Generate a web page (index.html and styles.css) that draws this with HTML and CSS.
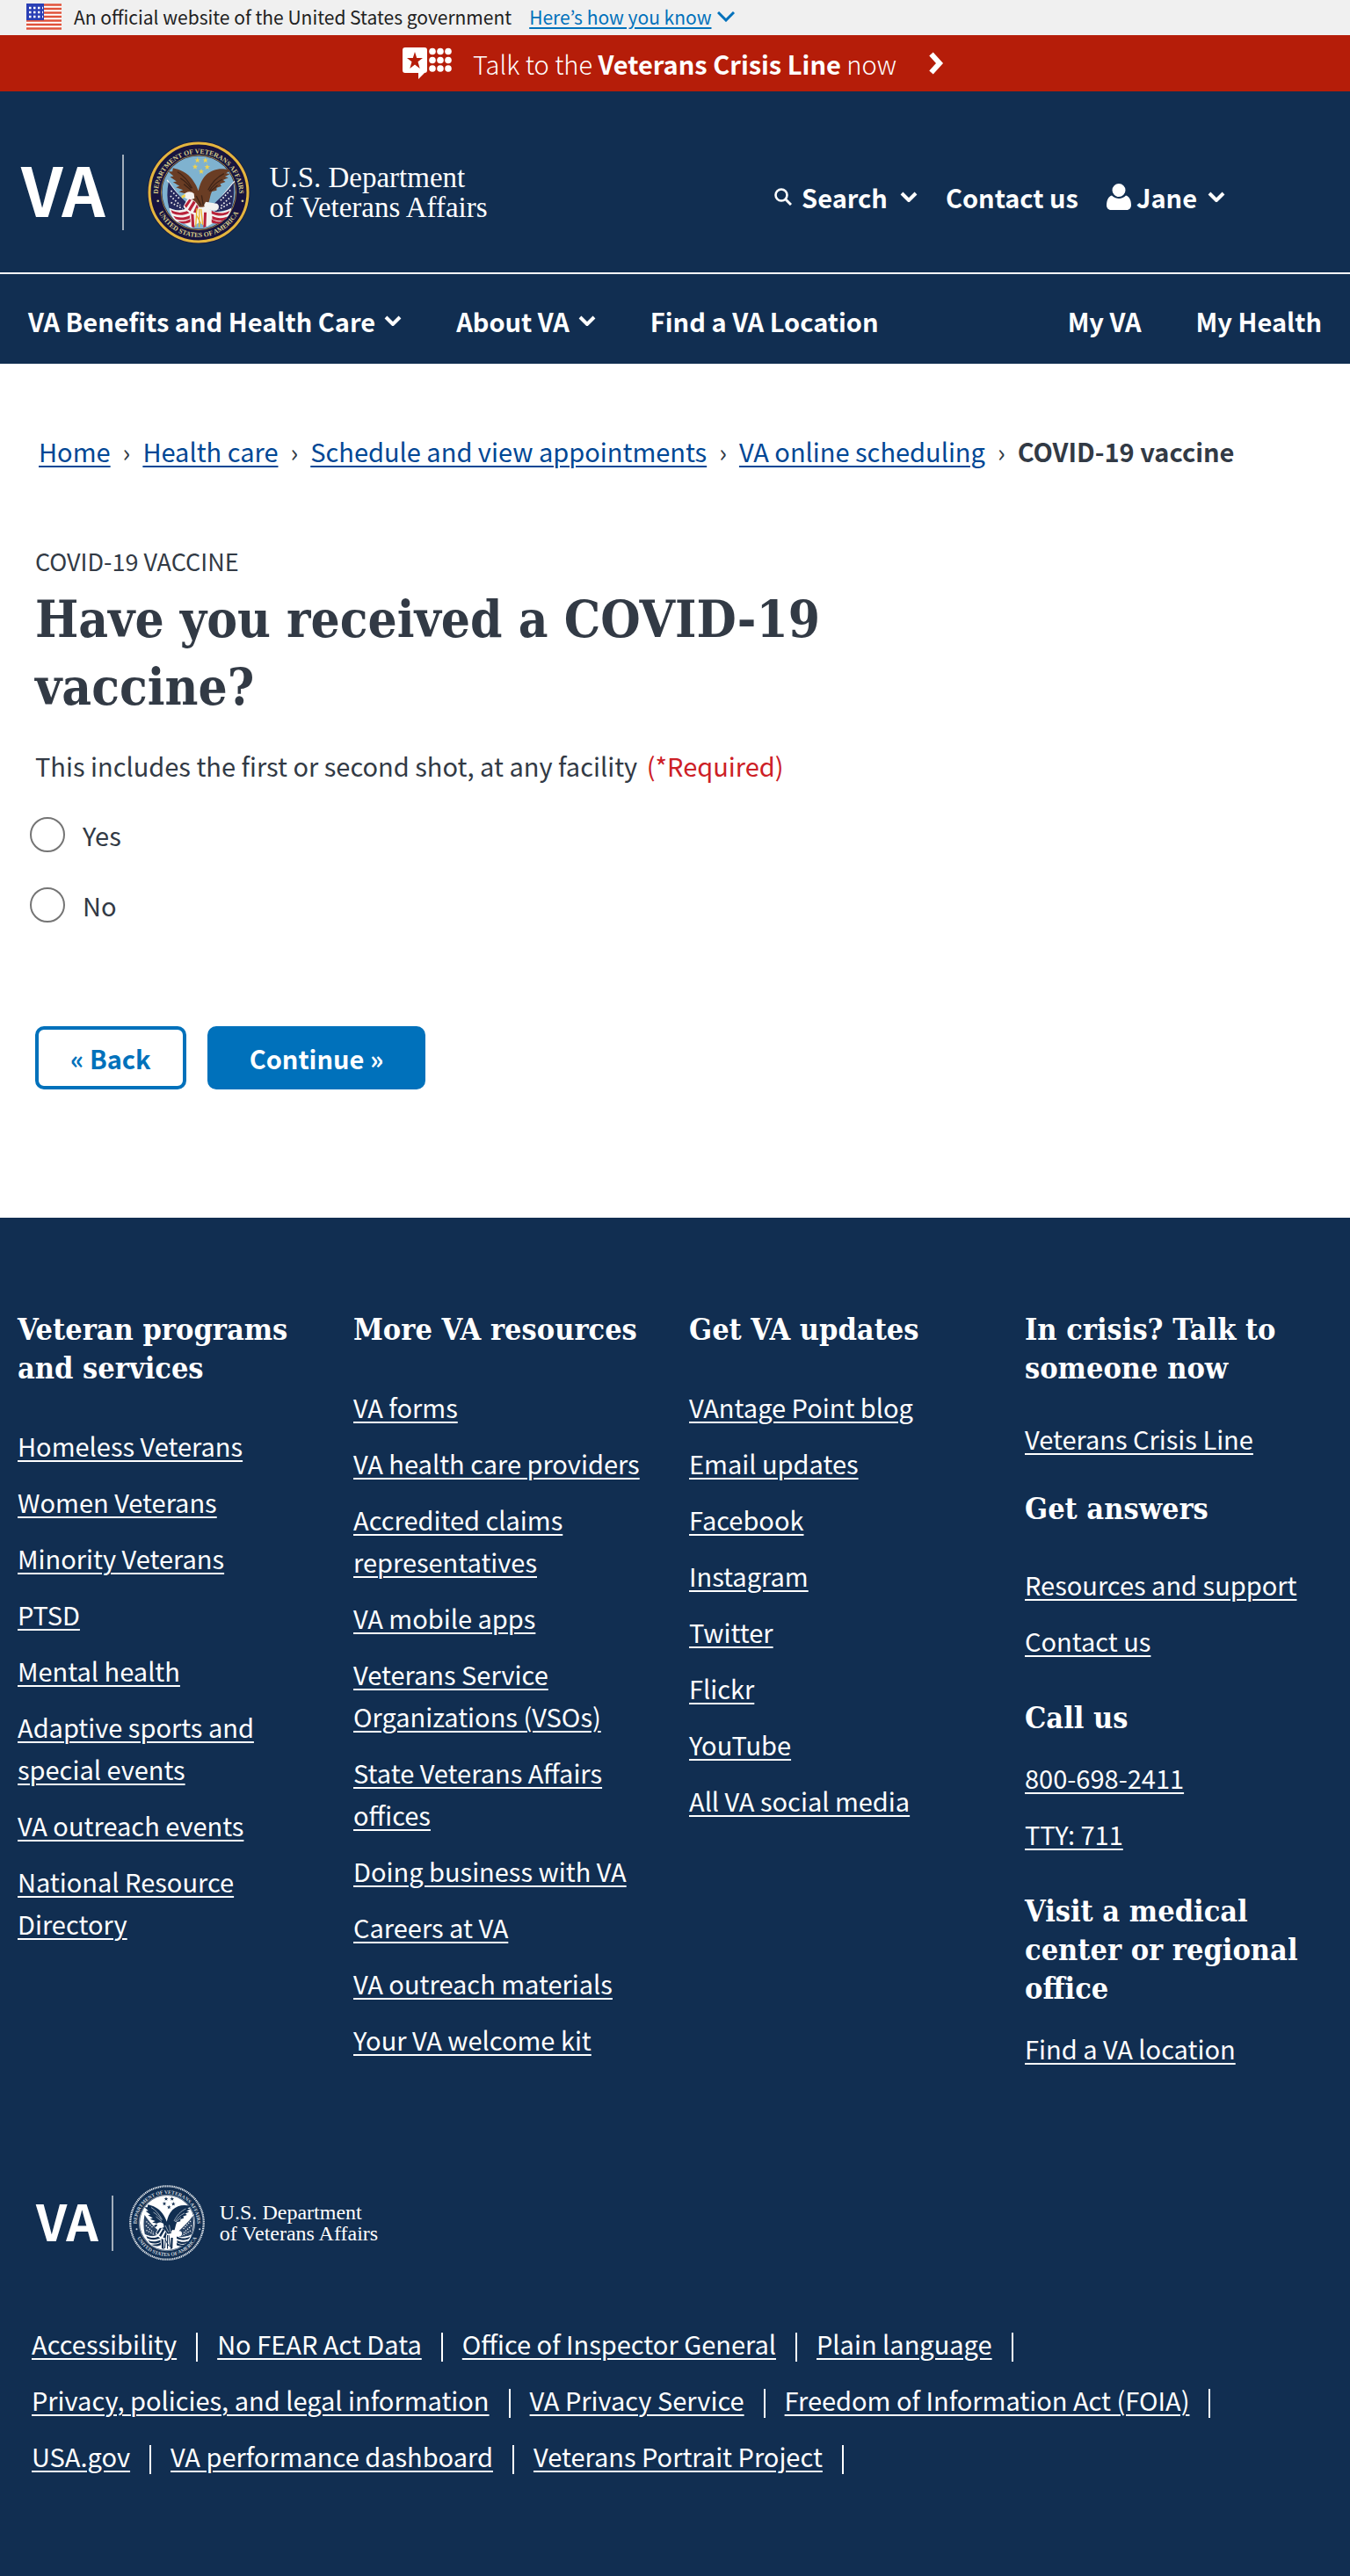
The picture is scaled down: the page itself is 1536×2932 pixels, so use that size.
FILE: index.html
```html
<!DOCTYPE html>
<html lang="en">
<head>
<meta charset="utf-8">
<meta name="viewport" content="width=device-width, initial-scale=1">
<title>COVID-19 vaccine | Veterans Affairs</title>
<link rel="stylesheet" href="styles.css">
</head>
<body>

<svg class="sprite" aria-hidden="true">
  <defs>
    <symbol id="chevron-down" viewBox="0 0 20 12"><path d="M2 2l8 8 8-8" fill="none" stroke="currentColor" stroke-width="4"/></symbol>
    <path id="seal-star" d="M0-10l2.4 6.8 7.2.1-5.8 4.3 2.1 6.9L0 4l-5.9 4.1 2.1-6.9-5.8-4.3 7.2-.1z"/>
    <path id="ring-top" d="M46 200A138 138 0 0 1 322 200"/>
    <path id="ring-bottom" d="M32 194A152 152 0 0 0 336 194"/>
    <!-- Department seal; colours come from the custom properties of the svg that uses it -->
    <symbol id="seal" viewBox="8 18 352 352">
      <circle class="s-edge" cx="184" cy="194" r="174"/>
      <circle class="s-rope" cx="184" cy="194" r="167"/>
      <circle class="s-ring" cx="184" cy="194" r="160"/>
      <circle class="s-line" cx="184" cy="194" r="127"/>
      <circle class="s-sky" cx="184" cy="194" r="124"/>
      <text class="s-text"><textPath href="#ring-top" startOffset="50%">DEPARTMENT OF VETERANS AFFAIRS</textPath></text>
      <text class="s-text"><textPath href="#ring-bottom" startOffset="50%">UNITED STATES OF AMERICA</textPath></text>
      <circle class="s-dot" cx="46" cy="223" r="4"/><circle class="s-dot" cx="333" cy="223" r="4"/>
      <g class="s-star">
        <use href="#seal-star" x="180" y="85"/><use href="#seal-star" x="207" y="85"/>
        <use href="#seal-star" x="172" y="107"/><use href="#seal-star" x="213" y="108"/>
        <use href="#seal-star" x="193" y="123"/>
      </g>
      <!-- flags -->
      <path class="s-pole" d="M77 152l90 122M306 156l-92 112"/>
      <path class="s-blue" d="M82 158c16 26 40 52 68 76l-8 30-58-16c-8-30-8-60-2-90z"/>
      <path class="s-blue" d="M302 162c-18 26-46 52-74 78l14 20 52-8c10-30 12-60 8-90z"/>
      <path class="s-dash" d="M90 188l30 28M88 206l34 32M90 228l40 22M292 186l-34 36M296 206l-36 34M292 230l-40 22"/>
      <path class="s-white" d="M84 246c26 14 48 10 70-4l34-16 40 30c24 10 46 2 68-10-8 36-30 50-56 48l-28 16-26-14-28 18-28-18c-22 6-40-16-46-50z"/>
      <path class="s-red" d="M90 254c22 12 42 10 62 0v10c-22 10-42 8-58 0zM98 274c20 8 38 6 56-2v10c-18 8-34 8-48 2zM112 292c16 2 30 0 44-8v11c-12 6-24 6-32 3zM290 256c-22 12-42 10-62 0v10c22 10 42 8 56 0zM282 276c-20 8-36 6-52-2v10c18 8 32 8 44 2zM268 293c-14 2-26 0-40-8v11c10 5 20 5 28 3zM158 262h9l3 52-10-4zM202 262h9l-2 48-9 4z"/>
      <!-- wings, body, head and tail -->
      <path class="s-eagle" d="M97 111c22 4 50 16 66 40 10 14 16 26 20 38 4-18 10-38 26-54 22-20 52-26 84-16l-16 10 14 2-18 9 12 4-18 8 8 6-18 7 4 8-16 5 0 9-16 4c-6 12-6 22-10 34-6 14-20 22-34 18-14-4-28-18-40-34l-14-4 12-6-26-7 14-6-24-9 12-5-22-13 12-2-22-16 12-2-18-16 14 0z"/>
      <path class="s-feather" d="M112 124c20 12 36 30 50 56M122 146c14 8 26 20 36 34M134 166l26 22M270 130c-24 12-40 28-54 56M264 150c-18 8-32 20-44 40M248 170l-24 20M176 206l16 32M194 204l6 34"/>
      <path class="s-head" d="M168 198c-10-10-28-8-34 4l-8 6 10 2c6 10 24 10 34 4zM208 226l38 6c10 6 8 18-2 24-16 0-32-6-42-18z"/>
      <path class="s-beak" d="M138 200l-13 6 3 9 11-7z"/>
      <path class="s-white" d="M146 216c16-2 32 10 40 30l-8 24c-20 0-36-10-46-28z"/>
      <path class="s-red" d="M152 217l-16 22 6 8 18-28zM166 222l-18 30 8 6 18-30zM178 234l-12 27 9 2 8-18z"/>
      <path class="s-claw" d="M178 248l-4 62M186 250v62M192 250l6 54M176 270l16 30"/>
    </symbol>
  </defs>
</svg>

<div class="gov-banner">
  <svg class="gov-flag" viewBox="0 0 40 30" aria-hidden="true">
    <rect width="40" height="30" fill="#fff"/>
    <path d="M0 1.500h40M0 6h40M0 10.500h40M0 15h40M0 19.500h40M0 24h40M0 28.500h40" stroke="#e0523a" stroke-width="2.400"/>
    <rect width="20" height="19" fill="#2a3fb5"/>
    <path d="M3 5h16M3 10h16M3 15h16" stroke="#fff" stroke-width="2.500" stroke-dasharray="2.500 2.500"/>
  </svg>
  <span class="gov-text">An official website of the United States government</span>
  <button class="gov-toggle" type="button"><span>Here’s how you know</span><svg class="chevron thin" aria-hidden="true" viewBox="0 0 20 12"><path d="M1 1l9 9 9-9" fill="none" stroke="currentColor" stroke-width="3"/></svg></button>
</div>

<a class="crisis" href="#crisis">
  <svg class="crisis-icon" viewBox="0 0 56 36" aria-hidden="true">
    <path fill="#fff" fill-rule="evenodd" d="M3 0h22a3 3 0 0 1 3 3v23a3 3 0 0 1-3 3l-7 7v-7H3a3 3 0 0 1-3-3V3a3 3 0 0 1 3-3zM14 5l-2.200 7H5l5.500 4.200L8.300 24l5.700-4.600 5.700 4.600-2.200-7.800L23 12h-6.800z"/>
    <g fill="#fff"><circle cx="34" cy="4.500" r="3.800"/><circle cx="43" cy="4.500" r="3.800"/><circle cx="52" cy="4.500" r="3.800"/><circle cx="34" cy="14.500" r="3.800"/><circle cx="43" cy="14.500" r="3.800"/><circle cx="52" cy="14.500" r="3.800"/><circle cx="34" cy="24" r="3.800"/><circle cx="43" cy="24" r="3.800"/><circle cx="52" cy="24" r="3.800"/></g>
  </svg>
  <span>Talk to the <strong>Veterans Crisis Line</strong> now</span>
  <svg class="crisis-arrow" viewBox="0 0 18 26" aria-hidden="true"><path d="M3.500 2.500L13 13 3.500 23.500" fill="none" stroke="#fff" stroke-width="6"/></svg>
</a>

<header class="header">
  <a class="logo" href="#home" aria-label="VA, U.S. Department of Veterans Affairs">
    <span class="logo-va">VA</span>
    <span class="logo-rule"></span>
    <svg class="seal seal-color" aria-hidden="true"><use href="#seal"/></svg>
    <span class="logo-name">U.S. Department<br>of Veterans Affairs</span>
  </a>
  <div class="utilities">
    <button class="utility" type="button">
      <svg class="icon-search" viewBox="0 0 20 20" aria-hidden="true"><circle cx="8" cy="8" r="6.500" fill="none" stroke="currentColor" stroke-width="2.600"/><path d="M13 13l6 6" stroke="currentColor" stroke-width="3"/></svg>
      <span class="search-label">Search</span>
      <svg class="chevron" aria-hidden="true"><use href="#chevron-down"/></svg>
    </button>
    <a class="utility" href="#contact">Contact us</a>
    <button class="utility" type="button">
      <svg class="icon-user" viewBox="0 0 28 30" aria-hidden="true"><path fill="currentColor" d="M14 0a7.500 7.500 0 0 1 0 15 7.500 7.500 0 0 1 0-15zM6 13.500c4 4.500 12 4.500 16 0 4 1 6 6 6 11 0 3-2 5.500-5 5.500H5c-3 0-5-2.500-5-5.500 0-5 2-10 6-11z"/></svg>
      <span class="user-label">Jane</span>
      <svg class="chevron" aria-hidden="true"><use href="#chevron-down"/></svg>
    </button>
  </div>
</header>

<nav class="main-nav" aria-label="Main">
  <button class="nav-item" type="button">VA Benefits and Health Care <svg class="chevron" aria-hidden="true"><use href="#chevron-down"/></svg></button>
  <button class="nav-item" type="button">About VA <svg class="chevron" aria-hidden="true"><use href="#chevron-down"/></svg></button>
  <a class="nav-item" href="#find">Find a VA Location</a>
  <a class="nav-item push" href="#myva">My VA</a>
  <a class="nav-item" href="#myhealth">My Health</a>
</nav>

<nav aria-label="Breadcrumb">
  <ol class="breadcrumb">
    <li><a href="#home">Home</a></li>
    <li><a href="#health">Health care</a></li>
    <li><a href="#appointments">Schedule and view appointments</a></li>
    <li><a href="#scheduling">VA online scheduling</a></li>
    <li><strong>COVID-19 vaccine</strong></li>
  </ol>
</nav>

<main class="content">
  <p class="kicker">COVID-19 VACCINE</p>
  <h1>Have you received a COVID-19 vaccine?</h1>
  <form>
    <fieldset class="question">
      <legend>This includes the first or second shot, at any facility <span class="required">(*Required)</span></legend>
      <div class="options">
        <label class="option" for="yes"><input type="radio" name="received" id="yes"><span>Yes</span></label>
        <label class="option" for="no"><input type="radio" name="received" id="no"><span>No</span></label>
      </div>
    </fieldset>
    <div class="actions">
      <button class="btn btn-back" type="button">« Back</button>
      <button class="btn btn-next" type="submit">Continue »</button>
    </div>
  </form>
</main>

<footer class="footer">
  <div class="footer-grid">
    <section>
      <h2>Veteran programs and services</h2>
      <ul>
        <li><a href="#f">Homeless Veterans</a></li>
        <li><a href="#f">Women Veterans</a></li>
        <li><a href="#f">Minority Veterans</a></li>
        <li><a href="#f">PTSD</a></li>
        <li><a href="#f">Mental health</a></li>
        <li><a href="#f">Adaptive sports and special events</a></li>
        <li><a href="#f">VA outreach events</a></li>
        <li><a href="#f">National Resource Directory</a></li>
      </ul>
    </section>
    <section>
      <h2>More VA resources</h2>
      <ul>
        <li><a href="#f">VA forms</a></li>
        <li><a href="#f">VA health care providers</a></li>
        <li><a href="#f">Accredited claims representatives</a></li>
        <li><a href="#f">VA mobile apps</a></li>
        <li><a href="#f">Veterans Service Organizations (VSOs)</a></li>
        <li><a href="#f">State Veterans Affairs offices</a></li>
        <li><a href="#f">Doing business with VA</a></li>
        <li><a href="#f">Careers at VA</a></li>
        <li><a href="#f">VA outreach materials</a></li>
        <li><a href="#f">Your VA welcome kit</a></li>
      </ul>
    </section>
    <section>
      <h2>Get VA updates</h2>
      <ul>
        <li><a href="#f">VAntage Point blog</a></li>
        <li><a href="#f">Email updates</a></li>
        <li><a href="#f">Facebook</a></li>
        <li><a href="#f">Instagram</a></li>
        <li><a href="#f">Twitter</a></li>
        <li><a href="#f">Flickr</a></li>
        <li><a href="#f">YouTube</a></li>
        <li><a href="#f">All VA social media</a></li>
      </ul>
    </section>
    <section>
      <h2>In crisis? Talk to someone now</h2>
      <ul class="near">
        <li><a href="#f">Veterans Crisis Line</a></li>
      </ul>
      <h2 class="near">Get answers</h2>
      <ul>
        <li><a href="#f">Resources and support</a></li>
        <li><a href="#f">Contact us</a></li>
      </ul>
      <h2>Call us</h2>
      <ul class="tight">
        <li><a href="#f">800-698-2411</a></li>
        <li><a href="#f">TTY: 711</a></li>
      </ul>
      <h2>Visit a medical center or regional office</h2>
      <ul class="tight">
        <li><a href="#f">Find a VA location</a></li>
      </ul>
    </section>
  </div>

  <a class="logo logo-small" href="#home" aria-label="VA, U.S. Department of Veterans Affairs">
    <span class="logo-va">VA</span>
    <span class="logo-rule"></span>
    <svg class="seal seal-mono" aria-hidden="true"><use href="#seal"/></svg>
    <span class="logo-name">U.S. Department<br>of Veterans Affairs</span>
  </a>

  <ul class="legal">
    <li><a href="#f">Accessibility</a></li>
    <li><a href="#f">No FEAR Act Data</a></li>
    <li><a href="#f">Office of Inspector General</a></li>
    <li><a href="#f">Plain language</a></li>
    <li><a href="#f">Privacy, policies, and legal information</a></li>
    <li><a href="#f">VA Privacy Service</a></li>
    <li><a href="#f">Freedom of Information Act (FOIA)</a></li>
    <li><a href="#f">USA.gov</a></li>
    <li><a href="#f">VA performance dashboard</a></li>
    <li><a href="#f">Veterans Portrait Project</a></li>
  </ul>
</footer>

</body>
</html>
```
FILE: styles.css
```css
:root {
  --navy: #112e51;
  --blue: #0071bb;
  --link: #004795;
  --ink: #323a45;
  --sans: "Noto Sans CJK KR", "Noto Sans", sans-serif;
  --slab: "DejaVu Serif Condensed", "DejaVu Serif", serif;
}

* { box-sizing: border-box; }

body {
  margin: 0;
  background: #fff;
  color: var(--ink);
  font: 29px/48px var(--sans);
}

a {
  color: inherit;
  text-decoration-thickness: 2px;
  text-underline-offset: 4px;
}

button {
  padding: 0;
  border: 0;
  background: none;
  color: inherit;
  font: inherit;
  cursor: pointer;
}

ul, ol { margin: 0; padding: 0; list-style: none; }

.sprite { position: absolute; width: 0; height: 0; }

.chevron { flex: none; width: 20px; height: 12px; }

/* Government banner */
.gov-banner {
  display: flex;
  align-items: center;
  padding: 0 30px 2px;
  background: #f0f0f0;
  color: #212121;
  font-size: 21px;
  line-height: 38px;
}
.gov-flag { width: 40px; height: 30px; margin-right: 14px; }
.gov-text { margin-right: 20px; }
.gov-toggle { display: flex; align-items: center; gap: 6px; color: var(--blue); }
.gov-toggle span { text-decoration: underline 2px; text-underline-offset: 3px; }

/* Crisis line */
.crisis {
  display: flex;
  align-items: center;
  justify-content: center;
  min-height: 64px;
  padding-right: 4px;
  background: #b51d09;
  color: #fff;
  font-weight: 300;
  text-decoration: none;
}
.crisis strong { font-weight: 700; }
.crisis-icon { width: 56px; height: 36px; margin-right: 24px; }
.crisis-arrow { width: 18px; height: 26px; margin-left: 36px; }

/* Header */
.header {
  display: flex;
  align-items: flex-start;
  justify-content: space-between;
  padding: 56px 142px 32px 24px;
  border-bottom: 2px solid #fff;
  background: var(--navy);
  color: #fff;
}

.logo { display: flex; align-items: center; color: #fff; text-decoration: none; }
.logo-va { padding-bottom: 10px; font-size: 77px; font-weight: 700; line-height: 108px; }
.logo-rule { width: 2px; height: 86px; margin: 0 26px 0 19px; background: #a3aebb; }
.logo-name {
  margin-left: 22px;
  font: 33px/34px "Liberation Serif", serif;
  white-space: nowrap;
}
.seal { width: 118px; height: 118px; }

.s-edge { fill: var(--edge); }
.s-rope { fill: none; stroke: var(--rope); stroke-width: 9; stroke-dasharray: var(--twist); }
.s-ring { fill: var(--ring); }
.s-line { fill: none; stroke: var(--rope); stroke-width: 2; }
.s-sky { fill: var(--sky); }
.s-text { fill: var(--lettering); font: 700 23px "Liberation Serif", serif; text-anchor: middle; }
.s-dot { fill: var(--lettering); }
.s-star { fill: var(--star); }
.s-pole { fill: none; stroke: var(--white); stroke-width: 4; }
.s-blue { fill: var(--flag-blue); }
.s-dash { fill: none; stroke: var(--white); stroke-width: 5; stroke-dasharray: 5 6; }
.s-white, .s-head { fill: var(--white); }
.s-red { fill: var(--red); }
.s-eagle { fill: var(--eagle); }
.s-feather { fill: none; stroke: var(--feather); stroke-width: 4; }
.s-beak { fill: var(--star); }
.s-claw { fill: none; stroke: var(--claw); stroke-width: 4; }

.seal-color {
  --edge: #17143f; --rope: #e3b53e; --twist: none; --ring: #17143f; --sky: #7fb2cf;
  --lettering: #d9cf8c; --star: #f2d34b; --white: #f4f2f0; --flag-blue: #25285c;
  --red: #b8223a; --eagle: #6a3d24; --feather: #3f2417; --claw: #e9b52c;
}
.seal-mono {
  --edge: #112e51; --rope: #e6eaee; --twist: 5 3; --ring: #112e51; --sky: #fff;
  --lettering: #cfd6de; --star: #112e51; --white: #fff; --flag-blue: #2b4566;
  --red: #112e51; --eagle: #112e51; --feather: #9aa7b6; --claw: #112e51;
}

.utilities { display: flex; align-items: center; gap: 32px; margin-top: 40px; }
.utility {
  display: flex;
  align-items: center;
  color: #fff;
  font-weight: 700;
  text-decoration: none;
}
.icon-search { width: 20px; height: 20px; }
.search-label { margin: 0 14px 0 11px; }
.icon-user { width: 28px; height: 30px; }
.user-label { margin: 0 12px 0 6px; }

/* Main navigation */
.main-nav {
  display: flex;
  gap: 62px;
  padding: 29px 32px 25px;
  background: var(--navy);
  color: #fff;
}
.nav-item {
  display: flex;
  align-items: center;
  gap: 10px;
  font-weight: 700;
  text-decoration: none;
}
.push { margin-left: auto; }

/* Breadcrumb */
.breadcrumb {
  display: flex;
  flex-wrap: wrap;
  gap: 14px;
  padding: 75px 44px 0;
  color: var(--link);
}
.breadcrumb li { display: flex; gap: 14px; }
.breadcrumb li:not(:last-child)::after { content: "›"; color: var(--ink); }
.breadcrumb strong { color: var(--ink); }

/* Question */
.content { max-width: 1040px; padding: 82px 40px 146px; }
.kicker { margin: 0 0 8px; font-size: 27px; line-height: 40px; }
h1 { margin: 0 0 26px; font: 700 58px/77px var(--slab); }
.question { min-width: 0; margin: 0; padding: 0; border: 0; }
.question legend { padding: 0; }
.required { margin-left: 4px; color: #cd2026; }
.options { display: grid; gap: 40px; margin: 35px 0 0 -6px; }
.option { display: flex; align-items: center; gap: 20px; line-height: 40px; }
.option input {
  appearance: none;
  width: 40px;
  height: 40px;
  margin: 0;
  border: 2px solid #757575;
  border-radius: 50%;
  background: #fff;
}
.option input:checked { box-shadow: inset 0 0 0 5px #fff; background: var(--blue); }

.actions { display: flex; gap: 24px; margin-top: 118px; }
.btn {
  padding: 12px 48px;
  border-radius: 10px;
  background: var(--blue);
  color: #fff;
  font-weight: 700;
}
.btn-back {
  padding: 8px 36px;
  border: 4px solid var(--blue);
  background: #fff;
  color: var(--blue);
}

/* Footer */
.footer { padding: 105px 0 114px; background: var(--navy); color: #fff; }
.footer-grid {
  display: grid;
  grid-template-columns: repeat(4, 1fr);
  gap: 40px;
  padding: 0 28px 0 20px;
}
.footer h2 { margin: 42px 0; font: 700 34px/44px var(--slab); }
.footer h2:first-child { margin-top: 0; }
.footer h2.near { margin: 34px 0 40px; }
.footer-grid ul { display: grid; gap: 16px; }
.footer-grid ul.near { margin-top: -8px; }
.footer-grid ul.tight { margin-top: -20px; }

.logo-small { width: max-content; margin: 131px 0 69px 41px; }
.logo-small .logo-va { padding-bottom: 8px; font-size: 57px; line-height: 80px; }
.logo-small .logo-rule { height: 63px; margin: 0 17px 0 15px; }
.logo-small .seal { width: 88px; height: 88px; }
.logo-small .logo-name { margin-left: 16px; font-size: 24px; line-height: 24px; }

.legal { display: flex; flex-wrap: wrap; gap: 16px 22px; padding: 0 36px; }
.legal li { display: flex; align-items: center; gap: 22px; }
.legal li::after { content: ""; width: 2px; height: 33px; margin-top: 8px; background: #fff; }
```
